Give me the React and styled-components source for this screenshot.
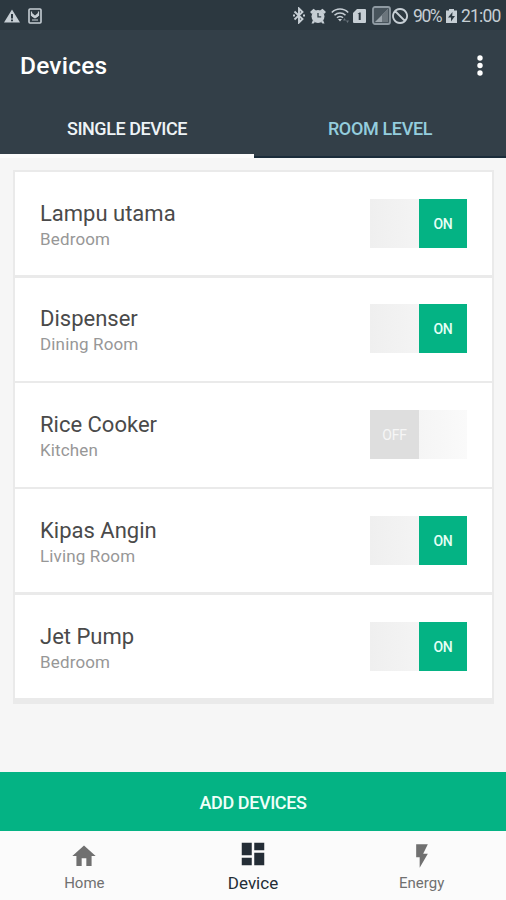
import React from "react";
import styled, { createGlobalStyle } from "styled-components";

const GlobalStyle = createGlobalStyle`
  * { box-sizing: border-box; }
  body { margin: 0; font-family: Roboto, "Liberation Sans", sans-serif; background: #f6f6f6; }
  svg { display: block; flex: none; }
`;

const Screen = styled.main`
  width: 506px;
  height: 900px;
  display: flex;
  flex-direction: column;
  overflow: hidden;
  background: #f6f6f6;
`;

const StatusBar = styled.div`
  flex: none;
  height: 30px;
  display: flex;
  align-items: center;
  justify-content: space-between;
  padding: 1px 5px 0 4px;
  background: #2c3840;
  color: #c6ced4;
`;

const StatusGroup = styled.div`
  display: flex;
  align-items: center;
`;

const StatusIcon = styled.svg`
  width: ${(p) => p.$w}px;
  height: ${(p) => p.$h}px;
  margin-right: ${(p) => p.$gap || 0}px;
  fill: currentColor;
`;

const StatusText = styled.span`
  width: ${(p) => p.$w}px;
  margin-right: ${(p) => p.$gap || 0}px;
  font-size: 17.5px;
  line-height: 28px;
  letter-spacing: ${(p) => p.$ls}px;
  white-space: nowrap;
`;

const AppBar = styled.header`
  flex: none;
  height: 71px;
  display: flex;
  align-items: center;
  justify-content: space-between;
  padding: 0 22px 0 20px;
  background: #333f48;
`;

const Title = styled.h1`
  margin: 0;
  font-size: 24.5px;
  line-height: 30px;
  font-weight: 500;
  letter-spacing: 0.2px;
  color: #fff;
`;

const MenuButton = styled.button`
  border: 0;
  padding: 0;
  background: none;
`;

const Tabs = styled.nav`
  flex: none;
  height: 57px;
  display: grid;
  grid-template-columns: 254px 252px;
  background: #333f48;
`;

const Tab = styled.button`
  border: 0;
  border-bottom: ${(p) => (p.$active ? "4px solid #fbfbfb" : "2px solid #1b2c3a")};
  padding: ${(p) => (p.$active ? "2px 0 0" : "0")};
  background: none;
  font: 500 18px/24px Roboto, sans-serif;
  letter-spacing: ${(p) => p.$ls}px;
  color: ${(p) => (p.$active ? "#eef3f6" : "#94cddd")};
`;

const Content = styled.section`
  flex: 1;
  padding: 12px 12px 0 13px;
`;

const DeviceList = styled.ul`
  list-style: none;
  margin: 0;
  padding: 2px 2px 6px;
  height: 534px;
  display: flex;
  flex-direction: column;
  gap: 2.5px;
  background: #eaeaea;
`;

const DeviceRow = styled.li`
  flex: 1;
  display: flex;
  align-items: center;
  justify-content: space-between;
  padding: 0 25px 0.8px;
  background: #fff;
`;

const DeviceText = styled.div`
  display: flex;
  flex-direction: column;
  padding-top: 4px;
`;

const DeviceName = styled.span`
  font-size: 22px;
  line-height: 27px;
  color: #4a4a4a;
`;

const DeviceRoom = styled.span`
  font-size: 17px;
  line-height: 24px;
  letter-spacing: 0.15px;
  color: #979797;
`;

const Switch = styled.button`
  width: 97px;
  height: 49px;
  border: 0;
  padding: 0;
  display: flex;
  justify-content: ${(p) => (p.$on ? "flex-end" : "flex-start")};
  background: ${(p) => (p.$on ? "linear-gradient(90deg, #efefef, #f4f4f4 50%)" : "linear-gradient(90deg, #f5f5f5 50%, #fafafa)")};
`;

const Thumb = styled.span`
  width: ${(p) => (p.$on ? 48 : 49)}px;
  height: 49px;
  display: grid;
  place-items: center;
  padding-top: 1px;
  background: ${(p) => (p.$on ? "#04b384" : "#dedede")};
  color: ${(p) => (p.$on ? "#e6fff6" : "#f6f6f6")};
  font: ${(p) => (p.$on ? 500 : 400)} 14px/18px Roboto, sans-serif;
  letter-spacing: -0.2px;
`;

const AddButton = styled.button`
  flex: none;
  height: 59px;
  border: 0;
  padding: 2px 0 0;
  background: #04b384;
  color: #effff9;
  font: 500 18px/24px Roboto, sans-serif;
  letter-spacing: -0.4px;
`;

const BottomNav = styled.nav`
  flex: none;
  height: 69px;
  display: grid;
  grid-template-columns: repeat(3, 1fr);
  background: #fbfbfb;
`;

const NavItem = styled.button`
  border: 0;
  padding: ${(p) => (p.$active ? 8 : 11)}px 0 0;
  display: flex;
  flex-direction: column;
  align-items: center;
  gap: ${(p) => (p.$active ? 2 : 1)}px;
  background: none;
  color: ${(p) => (p.$active ? "#242d36" : "#707070")};
  font: 400 ${(p) => (p.$active ? 17 : 15)}px/24px Roboto, sans-serif;
`;

const NavIcon = styled.svg`
  width: ${(p) => p.$size}px;
  height: ${(p) => p.$size}px;
  fill: currentColor;
`;

const devices = [
  { name: "Lampu utama", room: "Bedroom", on: true },
  { name: "Dispenser", room: "Dining Room", on: true },
  { name: "Rice Cooker", room: "Kitchen", on: false },
  { name: "Kipas Angin", room: "Living Room", on: true },
  { name: "Jet Pump", room: "Bedroom", on: true },
];

const navItems = [
  { label: "Home", size: 28, path: "M10 20.5V14h4v6.5h4.500V12H22L12 3 2 12h3.500v8.500z" },
  { label: "Device", size: 30, active: true, path: "M3 13h8V3H3v10zm0 8h8v-6H3v6zm10 0h8V11h-8v10zm0-18v6h8V3h-8z" },
  { label: "Energy", size: 28, path: "M7 2v11h3v9l7-12h-4l4-8z" },
];

function StatusIcons() {
  return (
    <StatusBar>
      <StatusGroup>
        <StatusIcon viewBox="0 0 16 14" $w={16} $h={14} $gap={8}>
          <path fillRule="evenodd" d="M8 0.5 16 13.5H0zM7 5v4.5h2V5zM7 10.5v1.8h2v-1.8z" />
        </StatusIcon>
        <StatusIcon viewBox="0 0 14 16" $w={14} $h={16}>
          <rect x="1" y="1" width="12" height="14" rx="1" fill="none" stroke="currentColor" strokeWidth="1.6" />
          <path d="M3.5 3.5v4L7 9.500l3.5-2v-4M4 12h6" fill="none" stroke="currentColor" strokeWidth="1.2" />
          <path d="m4 5 3 2.500L10 5v3.500l-3 2-3-2z" />
        </StatusIcon>
      </StatusGroup>
      <StatusGroup>
        <StatusIcon viewBox="0 0 12 17" $w={12} $h={17} $gap={5}>
          <path d="M1.500 4.500 9.500 12 6 15.500v-14L9.500 5l-8 7.500" fill="none" stroke="currentColor" strokeWidth="1.9" />
          <path d="M0 7.500h2v2H0zM10 7.500h2v2h-2z" />
        </StatusIcon>
        <StatusIcon viewBox="0 0 16 16" $w={16} $h={16} $gap={5}>
          <circle cx="8" cy="8.500" r="6.5" />
          <path d="M0 4 3.500.8 6 2.500 2 6zM16 4 12.500.8 10 2.500 14 6zM3 12l2 2-1.500 1.500H1.500zM13 12l-2 2 1.500 1.500h2z" />
          <path d="M8 5v3.800h3.200" fill="none" stroke="#35424a" strokeWidth="1.3" />
        </StatusIcon>
        <StatusIcon viewBox="0 0 19 17" $w={19} $h={17} $gap={3}>
          <g fill="none" stroke="currentColor" strokeWidth="1.6">
            <path d="M.8 5.500c4.600-4.600 11.800-4.600 16.400 0M3.500 8.200c3.100-3 7.900-3 11 0M6 10.800c1.700-1.700 4.300-1.700 6 0" />
          </g>
          <path d="m7 12 2 2.500 2-2.500z" />
          <path d="M12 13.500l1.500-2.500 1.500 2.500zM15 13.500h3L16.500 16z" opacity=".4" />
        </StatusIcon>
        <StatusIcon viewBox="0 0 13 16" $w={13} $h={16} $gap={6}>
          <path fillRule="evenodd" d="M4 1h8q1 0 1 1v12q0 1-1 1H1q-1 0-1-1V5zM4.500 6h1.200v6h2V4.500H6.500z" />
        </StatusIcon>
        <StatusIcon viewBox="0 0 19 19" $w={19} $h={19} $gap={1}>
          <rect x="1" y="1" width="17" height="17" rx="2" fill="#48545c" stroke="#8f9aa2" strokeWidth="1.8" />
          <path d="M16 3v13H3z" fill="#9ca5ac" />
          <path d="M16 3v13h-6V9z" fill="#6b757c" />
        </StatusIcon>
        <StatusIcon viewBox="0 0 16 16" $w={16} $h={16} $gap={5}>
          <path d="M3 3l10 10M8 1a7 7 0 1 0 .1 0z" fill="none" stroke="currentColor" strokeWidth="1.8" />
        </StatusIcon>
        <StatusText $w={29} $gap={4} $ls={-1.4}>90%</StatusText>
        <StatusIcon viewBox="0 0 11 16" $w={11} $h={16} $gap={4}>
          <path fillRule="evenodd" d="M3 1h5v1.500h3V15H0V2.500h3zM6.500 4 2 9.500h3v4L9 8H6.200z" />
        </StatusIcon>
        <StatusText $w={40} $ls={-0.8}>21:00</StatusText>
      </StatusGroup>
    </StatusBar>
  );
}

export default function App() {
  return (
    <>
      <GlobalStyle />
      <Screen>
        <StatusIcons />
        <AppBar>
          <Title>Devices</Title>
          <MenuButton aria-label="More options">
            <svg width="8" height="24" viewBox="0 0 8 24" fill="#fff">
              <circle cx="4" cy="4" r="2.7" />
              <circle cx="4" cy="11.5" r="2.7" />
              <circle cx="4" cy="19" r="2.7" />
            </svg>
          </MenuButton>
        </AppBar>
        <Tabs>
          <Tab $active $ls={-0.45}>SINGLE DEVICE</Tab>
          <Tab $ls={-0.35}>ROOM LEVEL</Tab>
        </Tabs>
        <Content>
          <DeviceList>
            {devices.map((d) => (
              <DeviceRow key={d.name}>
                <DeviceText>
                  <DeviceName>{d.name}</DeviceName>
                  <DeviceRoom>{d.room}</DeviceRoom>
                </DeviceText>
                <Switch $on={d.on} role="switch" aria-checked={d.on}>
                  <Thumb $on={d.on}>{d.on ? "ON" : "OFF"}</Thumb>
                </Switch>
              </DeviceRow>
            ))}
          </DeviceList>
        </Content>
        <AddButton>ADD DEVICES</AddButton>
        <BottomNav>
          {navItems.map((n) => (
            <NavItem key={n.label} $active={n.active}>
              <NavIcon viewBox="0 0 24 24" $size={n.size}>
                <path d={n.path} />
              </NavIcon>
              {n.label}
            </NavItem>
          ))}
        </BottomNav>
      </Screen>
    </>
  );
}
